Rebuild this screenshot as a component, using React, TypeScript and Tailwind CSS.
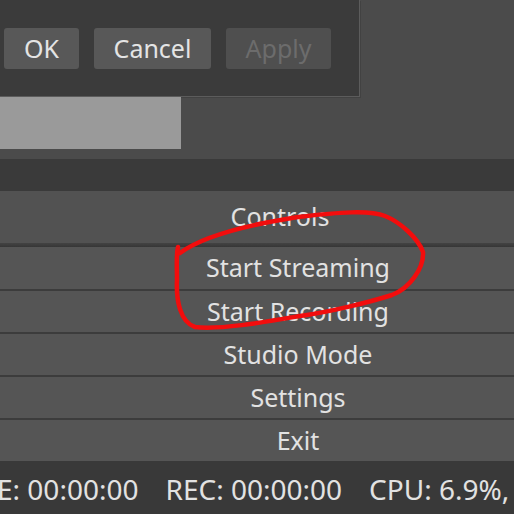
import React from "react";

const FONT = { fontFamily: '"Noto Sans", "Open Sans", sans-serif' };

const ROWS = ["Start Recording", "Studio Mode", "Settings", "Exit"];

function DialogButton({ label, disabled, w }: { label: string; disabled?: boolean; w: string }) {
  return (
    <div
      className={`${w} h-[41px] rounded-[3px] flex items-center justify-center text-[25px] ${
        disabled ? "bg-[#4f4f4f] text-[#6c6c6c]" : "bg-[#585858] text-[#e4e4e4]"
      }`}
    >
      {label}
    </div>
  );
}

export default function App() {
  return (
    <div className="relative w-[514px] h-[514px] overflow-hidden bg-[#4b4b4b]" style={FONT}>
      {/* top area: settings dialog floating over the preview */}
      <div className="h-[159px]">
        <div className="w-[360px] h-[97px] bg-[#3b3b3b] border-r border-b border-[#5c5c5c] shadow-[1px_1px_0_#424242]">
          <div className="flex gap-[15px] pl-[4px] pt-[28px]">
            <DialogButton label="OK" w="w-[75px]" />
            <DialogButton label="Cancel" w="w-[117px]" />
            <DialogButton label="Apply" w="w-[105px]" disabled />
          </div>
        </div>
        <div className="w-[181px] h-[52px] bg-[#9a9a9a]" />
      </div>

      {/* dock title band */}
      <div className="h-[32px] bg-[#3a3a3a]" />

      {/* Controls dock */}
      <div className="h-[52px] bg-[#525252] flex items-center justify-center pl-[46px] text-[25px] text-[#e2e2e2]">
        Controls
      </div>
      <div className="h-[4px] bg-gradient-to-b from-[#434343] to-[#363636]" />
      <div className="h-[42px] bg-[#555555] flex items-center justify-center pl-[82px] text-[25px] text-[#e2e2e2]">
        Start Streaming
      </div>
      {ROWS.map((label) => (
        <div
          key={label}
          className="h-[43px] border-t-2 border-[#3c3c3c] bg-[#555555] flex items-center justify-center pl-[82px] text-[25px] text-[#e2e2e2]"
        >
          {label}
        </div>
      ))}

      {/* status bar */}
      <div className="h-[53px] bg-[#393939] flex items-center gap-[27px] -ml-[3px] pt-[2px] whitespace-nowrap text-[28px] text-[#e2e2e2]">
        <span>E: 00:00:00</span>
        <span>REC: 00:00:00</span>
        <span>CPU: 6.9%,</span>
      </div>

      {/* red hand-drawn annotation */}
      <svg className="absolute inset-0 pointer-events-none" width="514" height="514" viewBox="0 0 514 514">
        <path
          d="M180,253 C200,238 240,226 298,217 C340,212 370,210 385,216 C400,222 418,238 423,252 C424,268 410,288 392,295 C370,302 330,312 300,316 C265,322 220,330 195,327 C180,322 176,300 177,280 C177,265 176,255 178,247"
          fill="none"
          stroke="#f20d0d"
          strokeWidth="4.5"
          strokeLinecap="round"
          strokeLinejoin="round"
        />
      </svg>
    </div>
  );
}
